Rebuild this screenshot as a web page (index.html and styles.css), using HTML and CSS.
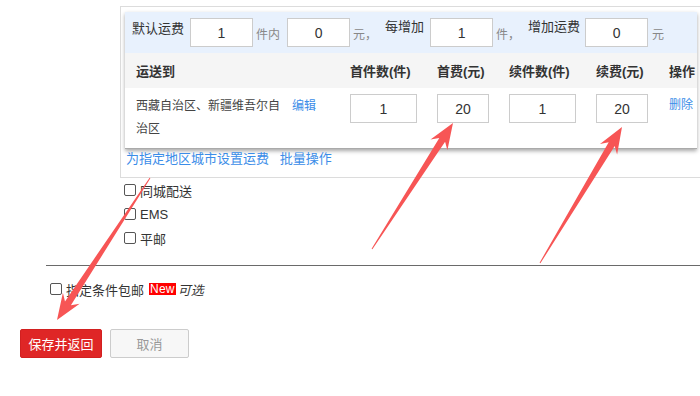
FILE: index.html
```html
<!DOCTYPE html>
<html lang="zh">
<head>
<meta charset="utf-8">
<link rel="stylesheet" href="styles.css">
</head>
<body>
<div class="page">
  <div class="area">
    <div class="panel">
      <div class="defrow">
        <span class="lbl lbl-main">默认运费</span>
        <input class="inp inp-def" value="1">
        <span class="unit">件内</span>
        <input class="inp inp-def gap7" value="0">
        <span class="unit">元，</span>
        <span class="lbl lbl-up gap8">每增加</span>
        <input class="inp inp-def gap6" value="1">
        <span class="unit">件，</span>
        <span class="lbl lbl-up gap8">增加运费</span>
        <input class="inp inp-def gap5" value="0">
        <span class="unit gap4">元</span>
      </div>
      <div class="grid thead">
        <div class="c1">运送到</div>
        <div>首件数(件)</div>
        <div>首费(元)</div>
        <div>续件数(件)</div>
        <div>续费(元)</div>
        <div>操作</div>
      </div>
      <div class="grid trow">
        <div class="c1 region">
          <span class="region-text">西藏自治区、新疆维吾尔自治区</span>
          <a class="link edit">编辑</a>
        </div>
        <div><input class="inp inp-num" value="1"></div>
        <div><input class="inp inp-fee" value="20"></div>
        <div><input class="inp inp-num" value="1"></div>
        <div><input class="inp inp-fee" value="20"></div>
        <div><a class="link del">删除</a></div>
      </div>
    </div>
    <div class="links">
      <a class="link">为指定地区城市设置运费</a>
      <a class="link batch">批量操作</a>
    </div>
  </div>

  <div class="methods">
    <label class="chk"><input type="checkbox"><span>同城配送</span></label>
    <label class="chk"><input type="checkbox"><span>EMS</span></label>
    <label class="chk"><input type="checkbox"><span>平邮</span></label>
  </div>

  <div class="divider"></div>

  <div class="free">
    <label class="chk"><input type="checkbox"><span>指定条件包邮</span></label>
    <span class="badge">New</span><span class="opt">可选</span>
  </div>

  <div class="actions">
    <button class="btn btn-save">保存并返回</button>
    <button class="btn btn-cancel">取消</button>
  </div>
</div>

<svg class="arrows" width="700" height="396" viewBox="0 0 700 396">
  <polygon fill="#f75555" points="372.4,249.3 445.1,141.7 447.4,150.3 453,123 430.5,139.5 439.3,137.9 371.6,248.7"/>
  <polygon fill="#f75555" points="540.4,263.3 614.7,145.9 617.1,154.4 622,127 600,144.1 608.7,142.3 539.6,262.7"/>
  <polygon fill="#f75555" points="150.4,178.3 70.9,305.2 79.6,303.7 57,320 62.9,292.8 65,301.4 149.6,177.7"/>
</svg>
</body>
</html>
```

FILE: styles.css
```css
html, body {
  margin: 0;
  padding: 0;
  overflow: hidden;
  background: #fff;
}
body {
  width: 700px;
  height: 396px;
  position: relative;
  font-family: "Liberation Sans", "Noto Sans CJK SC", sans-serif;
  font-size: 13px;
  color: #333;
}
.page {
  padding-top: 6px;
}
.area {
  margin-left: 120px;
  width: 575px;
  border: 1px solid #dcdcdc;
  border-right: none;
  padding: 5px 0 8px 4px;
}
.panel {
  width: 572px;
  background: #fff;
  box-shadow: 0 2px 4px rgba(0, 0, 0, 0.35);
  border-bottom: 1px solid #aaa;
}
.defrow {
  height: 41px;
  background: #e8f1fd;
  display: flex;
  align-items: center;
  padding-left: 7px;
}
.lbl {
  line-height: 18px;
  color: #333;
}
.lbl-main { margin-bottom: 8px; margin-right: 6px; }
.lbl-up { margin-bottom: 12px; }
.unit {
  font-size: 12px;
  color: #888;
  margin-left: 3px;
  margin-top: 2px;
}
.gap4 { margin-left: 4px; }
.gap5 { margin-left: 5px; }
.gap6 { margin-left: 6px; }
.gap7 { margin-left: 7px; }
.gap8 { margin-left: 8px; }

.inp {
  box-sizing: border-box;
  height: 29px;
  border: 1px solid #ccc;
  background: #fff;
  text-align: center;
  font-family: "Liberation Sans", "Noto Sans CJK SC", sans-serif;
  font-size: 14px;
  color: #333;
  padding: 0;
  outline: none;
}
.inp-def { width: 63px; }
.inp-num { width: 67px; }
.inp-fee { width: 52px; }

.grid {
  display: grid;
  grid-template-columns: 225px 87px 72px 87px 73px 1fr;
}
.thead {
  height: 35px;
  background: #f5f5f5;
  align-items: center;
  font-weight: bold;
  font-size: 13px;
  color: #333;
}
.c1 { padding-left: 11px; }
.trow {
  box-sizing: border-box;
  height: 60px;
  padding-top: 6px;
  align-items: start;
}
.region {
  display: flex;
  align-items: flex-start;
  padding-top: 1px;
}
.region-text {
  width: 147px;
  font-size: 12px;
  line-height: 23px;
  color: #444;
}
.link {
  color: #3b8de8;
  text-decoration: none;
  cursor: pointer;
}
.edit {
  font-size: 12px;
  line-height: 23px;
  margin-left: 9px;
}
.del {
  display: block;
  font-size: 12px;
  line-height: 23px;
}
.links {
  margin-left: 1px;
  line-height: 20px;
  font-size: 13px;
}
.batch { margin-left: 7px; }

.methods {
  margin-left: 124px;
}
.chk {
  display: flex;
  align-items: center;
  height: 24px;
  font-size: 13px;
  color: #333;
}
.chk input {
  -webkit-appearance: none;
  appearance: none;
  box-sizing: border-box;
  width: 12px;
  height: 12px;
  margin: 0 4px 0 0;
  border: 1px solid #555;
  border-radius: 2px;
  background: #fff;
}
.divider {
  margin: 15px 0 0 46px;
  height: 1px;
  background: #6a6a6a;
}
.free {
  margin: 13px 0 0 50px;
  display: flex;
  align-items: center;
  height: 20px;
}
.free .chk { height: 20px; }
.badge {
  margin-left: 5px;
  background: #f00;
  color: #fff;
  font-family: "Liberation Sans", sans-serif;
  font-size: 12px;
  line-height: 12px;
  height: 12px;
  padding: 0 1px;
  letter-spacing: 0.2px;
}
.opt {
  margin-left: 2px;
  font-style: italic;
  font-size: 13px;
  color: #333;
}
.actions {
  margin: 30px 0 0 20px;
  display: flex;
  gap: 8px;
}
.btn {
  box-sizing: border-box;
  height: 29px;
  font-family: "Liberation Sans", "Noto Sans CJK SC", sans-serif;
  font-size: 13px;
  border-radius: 2px;
  padding: 0;
}
.btn-save {
  width: 82px;
  background: #df2626;
  border: 1px solid #d22020;
  color: #fff;
}
.btn-cancel {
  width: 79px;
  background: #f7f7f7;
  border: 1px solid #ccc;
  color: #999;
}
.arrows {
  position: absolute;
  left: 0;
  top: 0;
  pointer-events: none;
}
```
